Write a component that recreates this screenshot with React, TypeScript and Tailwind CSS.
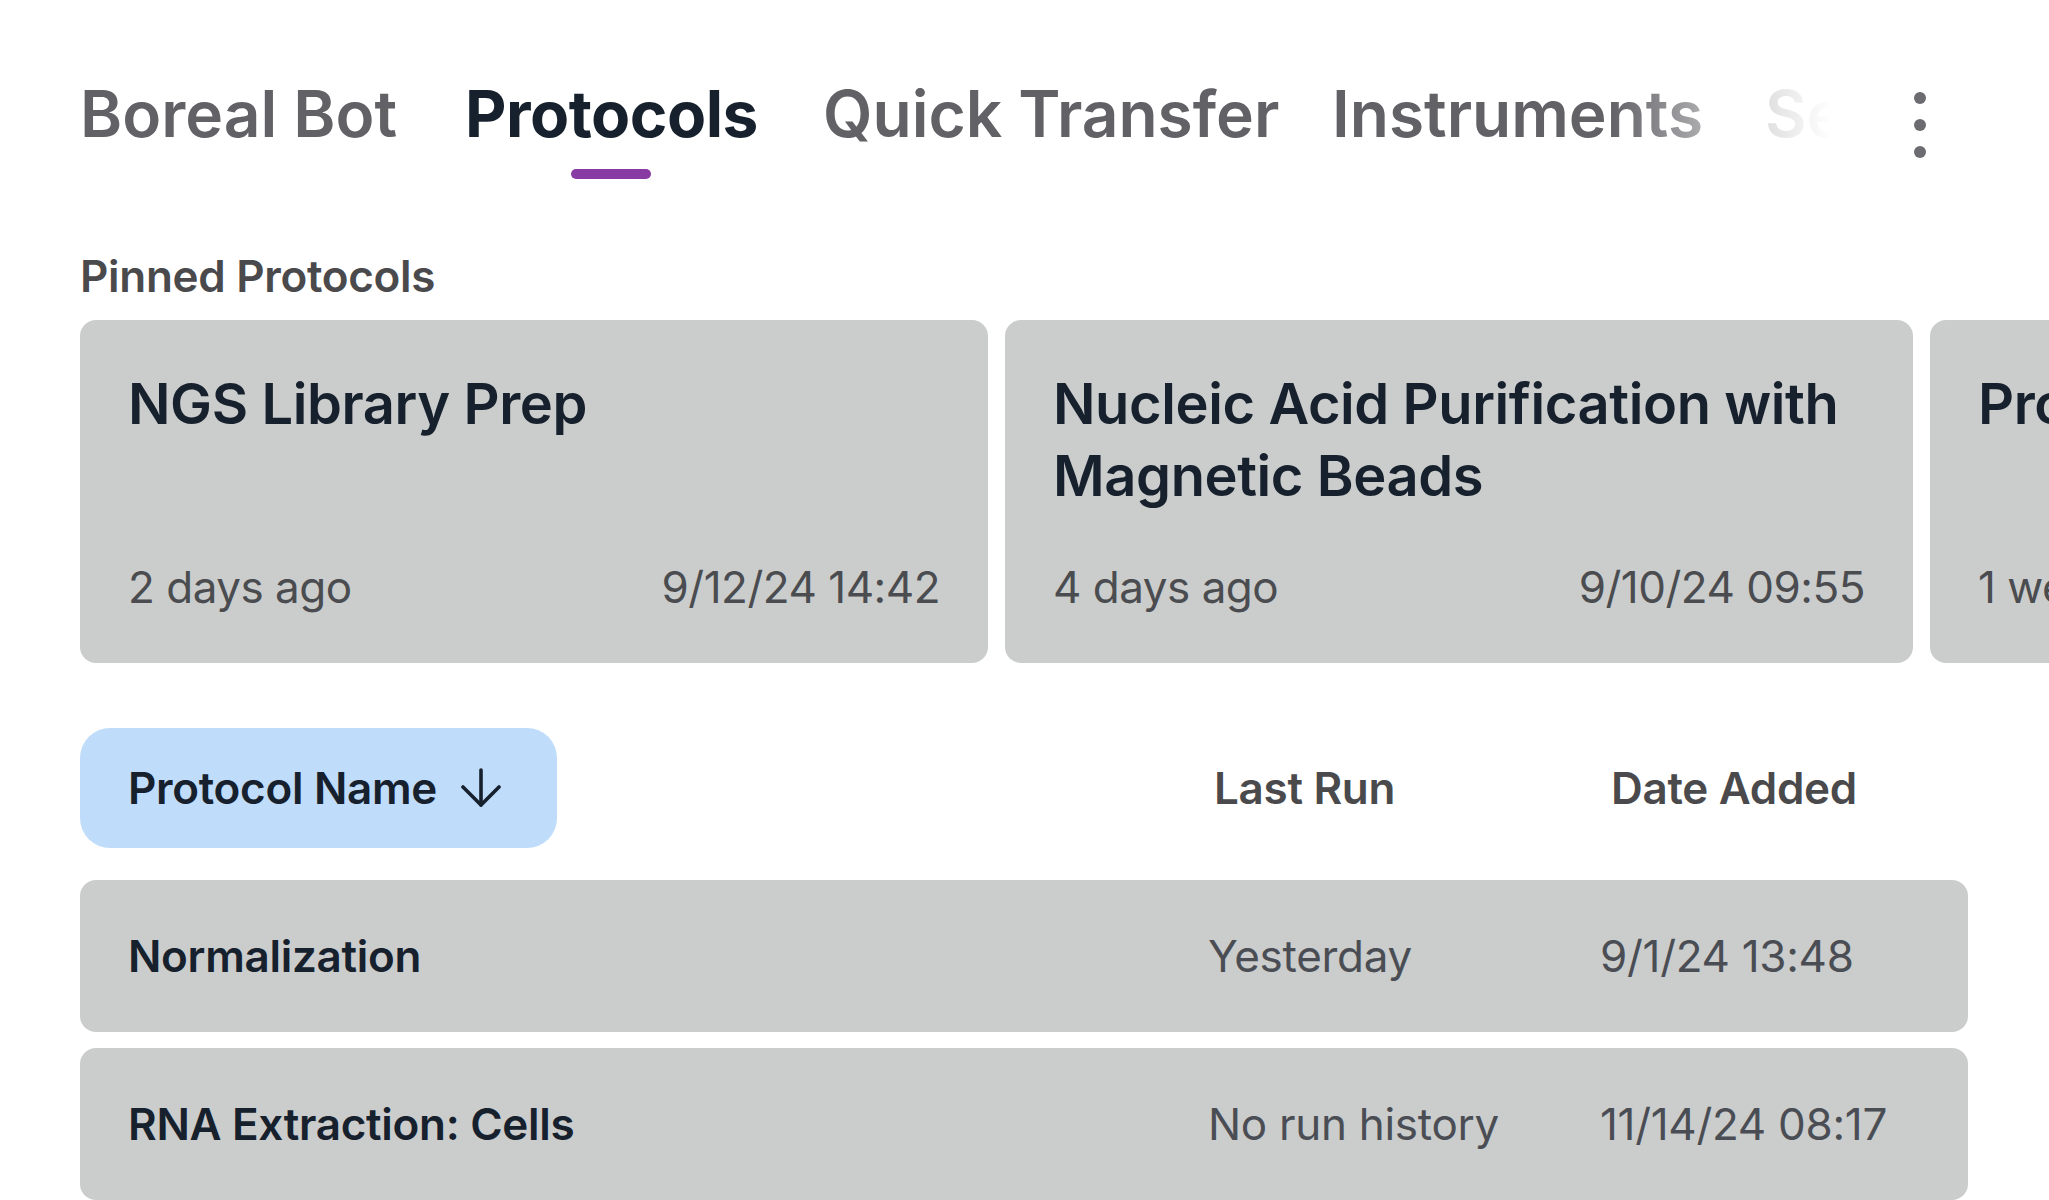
import React from "react";

const tabs = [
  { label: "Boreal Bot", w: "w-[385px]", active: false },
  { label: "Protocols", w: "w-[358px]", active: true },
  { label: "Quick Transfer", w: "w-[509px]", active: false },
  { label: "Instruments", w: "w-[433px]", active: false },
  { label: "Settings", w: "w-[400px]", active: false },
];

const pinned = [
  { title: "NGS Library Prep", ago: "2 days ago", date: "9/12/24 14:42" },
  { title: "Nucleic Acid Purification with Magnetic Beads", ago: "4 days ago", date: "9/10/24 09:55" },
  { title: "Protein Quantification Assay", ago: "1 week ago", date: "9/7/24 11:20" },
];

const rows = [
  { name: "Normalization", last: "Yesterday", date: "9/1/24 13:48" },
  { name: "RNA Extraction: Cells", last: "No run history", date: "11/14/24 08:17" },
];

function ArrowDown() {
  return (
    <svg width="40" height="40" viewBox="0 0 40 40" fill="none" stroke="#16212d" strokeWidth="3.6" strokeLinecap="round" strokeLinejoin="round">
      <line x1="20" y1="2" x2="20" y2="37" />
      <polyline points="2,19 20,37 38,19" />
    </svg>
  );
}

export default function App() {
  return (
    <div className="w-[2049px] h-[1200px] overflow-hidden bg-white font-['Inter','Noto_Sans',sans-serif] text-[#16212d]">
      {/* Navigation */}
      <nav className="flex items-start pt-[72px] pl-[80px]">
        <div className="relative flex w-[1770px] shrink-0 overflow-hidden">
          {tabs.map((t) => (
            <div key={t.label} className={`${t.w} shrink-0`}>
              <div className="inline-flex flex-col items-center">
                <span
                  className={
                    t.active
                      ? "whitespace-nowrap text-[64px] leading-[84px] font-bold text-[#16212d] tracking-[-0.5px]"
                      : "whitespace-nowrap text-[64px] leading-[84px] font-semibold text-[#616166]"
                  }
                >
                  {t.label}
                </span>
                <div className={t.active ? "mt-[13px] h-[10px] w-[80px] rounded-full bg-[#893ba4]" : "mt-[13px] h-[10px] w-[80px]"} />
              </div>
            </div>
          ))}
          <div className="pointer-events-none absolute inset-y-0 right-0 w-[240px] bg-linear-to-r from-white/0 via-white/80 via-[65%] to-white to-[92%]" />
        </div>
        <div className="ml-[64px] mt-[20px] flex flex-col gap-[15px]">
          <div className="h-[12px] w-[12px] rounded-full bg-[#6b6b70]" />
          <div className="h-[12px] w-[12px] rounded-full bg-[#6b6b70]" />
          <div className="h-[12px] w-[12px] rounded-full bg-[#6b6b70]" />
        </div>
      </nav>

      {/* Pinned protocols */}
      <section className="mt-[69px] pl-[80px]">
        <h2 className="text-[44px] leading-[56px] font-semibold text-[#4a4a4c] tracking-[-0.3px]">Pinned Protocols</h2>
        <div className="mt-[16px] flex gap-[17px]">
          {pinned.map((p) => (
            <div key={p.title} className="flex h-[343px] w-[908px] shrink-0 flex-col justify-between rounded-[16px] bg-[#cbcccc] px-[48px] pt-[48px] pb-[48px]">
              <div className="text-[56px] leading-[72px] font-semibold text-[#16212d] tracking-[-0.4px]">{p.title}</div>
              <div className="flex items-center justify-between text-[44px] leading-[56px] text-[#4a4c50] tracking-[-0.5px]">
                <span>{p.ago}</span>
                <span>{p.date}</span>
              </div>
            </div>
          ))}
        </div>
      </section>

      {/* Table header */}
      <div className="mt-[65px] ml-[80px] flex w-[1888px] items-center">
        <div className="flex h-[120px] items-center rounded-[30px] bg-[#bfdcfb] pl-[48px] pr-[56px]">
          <span className="text-[44px] leading-[56px] font-semibold text-[#16212d] tracking-[-0.3px]">Protocol Name</span>
          <span className="ml-[24px] flex">
            <ArrowDown />
          </span>
        </div>
        <div className="flex-1" />
        <div className="w-[397px] text-[44px] leading-[56px] font-semibold text-[#4a4a4c] tracking-[-0.3px]">Last Run</div>
        <div className="w-[357px] text-[44px] leading-[56px] font-semibold text-[#4a4a4c] tracking-[-0.3px]">Date Added</div>
      </div>

      {/* Rows */}
      <div className="mt-[32px] ml-[80px] flex w-[1888px] flex-col gap-[16px]">
        {rows.map((r) => (
          <div key={r.name} className="flex h-[152px] shrink-0 items-center rounded-[16px] bg-[#cbcccc] pl-[48px]">
            <div className="flex-1 text-[44px] leading-[56px] font-semibold text-[#16212d] tracking-[-0.3px]">{r.name}</div>
            <div className="w-[392px] text-[44px] leading-[56px] text-[#4a4e54] tracking-[-0.3px]">{r.last}</div>
            <div className="w-[368px] text-[44px] leading-[56px] text-[#4a4e54] tracking-[-0.3px]">{r.date}</div>
          </div>
        ))}
      </div>
    </div>
  );
}
